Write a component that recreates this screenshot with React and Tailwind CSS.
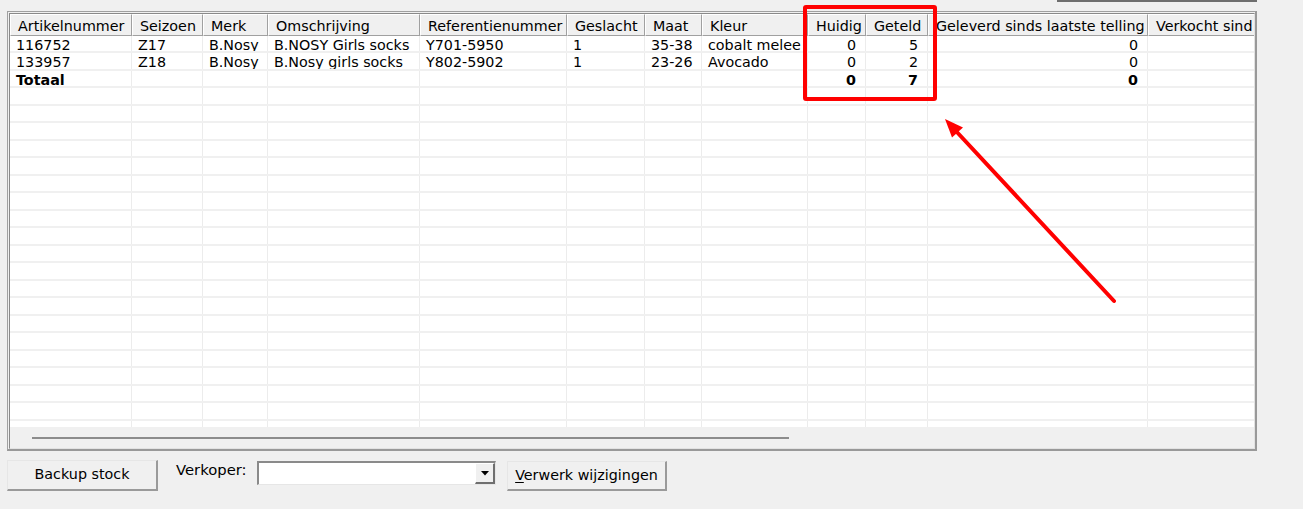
import React from 'react';

const columns = [
  { label: 'Artikelnummer', w: 'w-[122px]' },
  { label: 'Seizoen', w: 'w-[71px]' },
  { label: 'Merk', w: 'w-[65px]' },
  { label: 'Omschrijving', w: 'w-[152px]' },
  { label: 'Referentienummer', w: 'w-[147px]' },
  { label: 'Geslacht', w: 'w-[78px]' },
  { label: 'Maat', w: 'w-[57px]' },
  { label: 'Kleur', w: 'w-[106px]' },
  { label: 'Huidig', w: 'w-[58px]', right: true },
  { label: 'Geteld', w: 'w-[62px]', right: true },
  { label: 'Geleverd sinds laatste telling', w: 'w-[220px]', right: true },
  // last column runs past the edge of the grid, only its start is visible
  { label: 'Verkocht sind', w: 'w-[220px]', right: true },
];

const rows = [
  ['116752', 'Z17', 'B.Nosy', 'B.NOSY Girls socks', 'Y701-5950', '1', '35-38', 'cobalt melee', '0', '5', '0', ''],
  ['133957', 'Z18', 'B.Nosy', 'B.Nosy girls socks', 'Y802-5902', '1', '23-26', 'Avocado', '0', '2', '0', ''],
  ['Totaal', '', '', '', '', '', '', '', '0', '7', '0', '', true],
];

const EMPTY_ROWS = 20;

function HeaderRow() {
  return (
    <div className="flex h-[21.5px] shrink-0">
      {columns.map((c) => (
        <div
          key={c.label}
          className={`${c.w} shrink-0 overflow-hidden whitespace-nowrap border-t border-l border-r border-b border-t-white border-l-white border-r-[#a0a0a0] border-b-[#a0a0a0] bg-[#f0f0f0] pl-[7px] leading-[22px] text-black`}
        >
          {c.label}
        </div>
      ))}
    </div>
  );
}

function DataRow({ cells, bold }) {
  return (
    <div className="flex h-[17.5px] shrink-0 border-b-2 border-[#f0f0f0]">
      {columns.map((c, i) => (
        <div
          key={c.label}
          className={`${c.w} shrink-0 overflow-hidden whitespace-nowrap border-r border-[#ececec] leading-[19px] ${c.right ? 'pr-[9px] text-right' : 'pl-[6px]'} ${bold ? 'font-bold' : ''}`}
        >
          {cells ? cells[i] : ''}
        </div>
      ))}
    </div>
  );
}

function Grid() {
  return (
    <div className="ml-[7px] h-[440px] w-[1250px] border-t border-l border-r-2 border-b-2 border-t-[#a0a0a0] border-l-[#a0a0a0] border-r-[#999999] border-b-[#999999] pt-px pl-px">
      <div className="flex h-full w-full flex-col overflow-hidden border-t border-l border-r border-b border-t-[#8a8a8a] border-l-[#8a8a8a] border-r-[#e2e2e2] border-b-[#e2e2e2]">
        <HeaderRow />
        <div className="flex h-[391.5px] shrink-0 flex-col overflow-hidden bg-white">
          {rows.map((r, i) => (
            <DataRow key={i} cells={r} bold={r[12]} />
          ))}
          {Array.from({ length: EMPTY_ROWS }).map((_, i) => (
            <DataRow key={'e' + i} />
          ))}
        </div>
        <div className="flex flex-1 items-center bg-[#f0f0f0]">
          <div className="ml-[22px] h-[2px] w-[757px] bg-[#8c8c8c]" />
        </div>
      </div>
    </div>
  );
}

function Button({ children, className }) {
  return (
    <button
      className={`flex items-center justify-center border-t border-l border-r-2 border-b-2 border-t-[#e6e6e6] border-l-[#e6e6e6] border-r-[#9a9a9a] border-b-[#9a9a9a] bg-[#f0f0f0] text-black ${className}`}
    >
      {children}
    </button>
  );
}

export default function App() {
  return (
    <div className="relative h-[509px] w-[1303px] overflow-hidden bg-[#f0f0f0] font-['DejaVu_Sans',sans-serif] text-[14.3px] text-black">
      {/* strip of the control above, cut off by the screenshot */}
      <div className="h-[11px]">
        <div className="ml-[1057px] h-[2px] w-[200px] bg-[#6e6e6e]" />
      </div>

      <Grid />

      <div className="mt-[9px] flex items-start">
        <Button className="ml-[7px] h-[31px] w-[151px]">Backup stock</Button>
        <span className="ml-[18px] mt-[2px] w-[81px] shrink-0 text-[14.8px] leading-[16px]">Verkoper:</span>
        <div className="mt-px flex h-[24px] w-[239px] border-t-2 border-l-2 border-r border-b border-t-[#8a8a8a] border-l-[#8a8a8a] border-r-[#e6e6e6] border-b-[#e6e6e6] bg-white">
          <div className="flex-1" />
          <div className="flex h-[21px] w-[20px] items-center justify-center border-t border-l border-r-2 border-b-2 border-t-white border-l-white border-r-[#6f6f6f] border-b-[#6f6f6f] bg-[#f0f0f0]">
            <svg width="8" height="5" viewBox="0 0 8 5">
              <path d="M0 0h8L4 4.5z" fill="#000" />
            </svg>
          </div>
        </div>
        <Button className="ml-[11px] mt-px h-[30px] w-[160px]">
          <span>
            <span className="underline underline-offset-2">V</span>erwerk wijzigingen
          </span>
        </Button>
      </div>

      {/* annotation overlay */}
      <div className="absolute left-[803px] top-[5px] h-[96px] w-[134px] rounded-[3px] border-4 border-[#ff0000]" />
      <svg className="pointer-events-none absolute left-0 top-0" width="1303" height="509">
        <line x1="1114" y1="301" x2="955" y2="130" stroke="#ff0000" strokeWidth="4" strokeLinecap="round" />
        <polygon points="945,119 952,137.5 963,127.5" fill="#ff0000" />
      </svg>
    </div>
  );
}
